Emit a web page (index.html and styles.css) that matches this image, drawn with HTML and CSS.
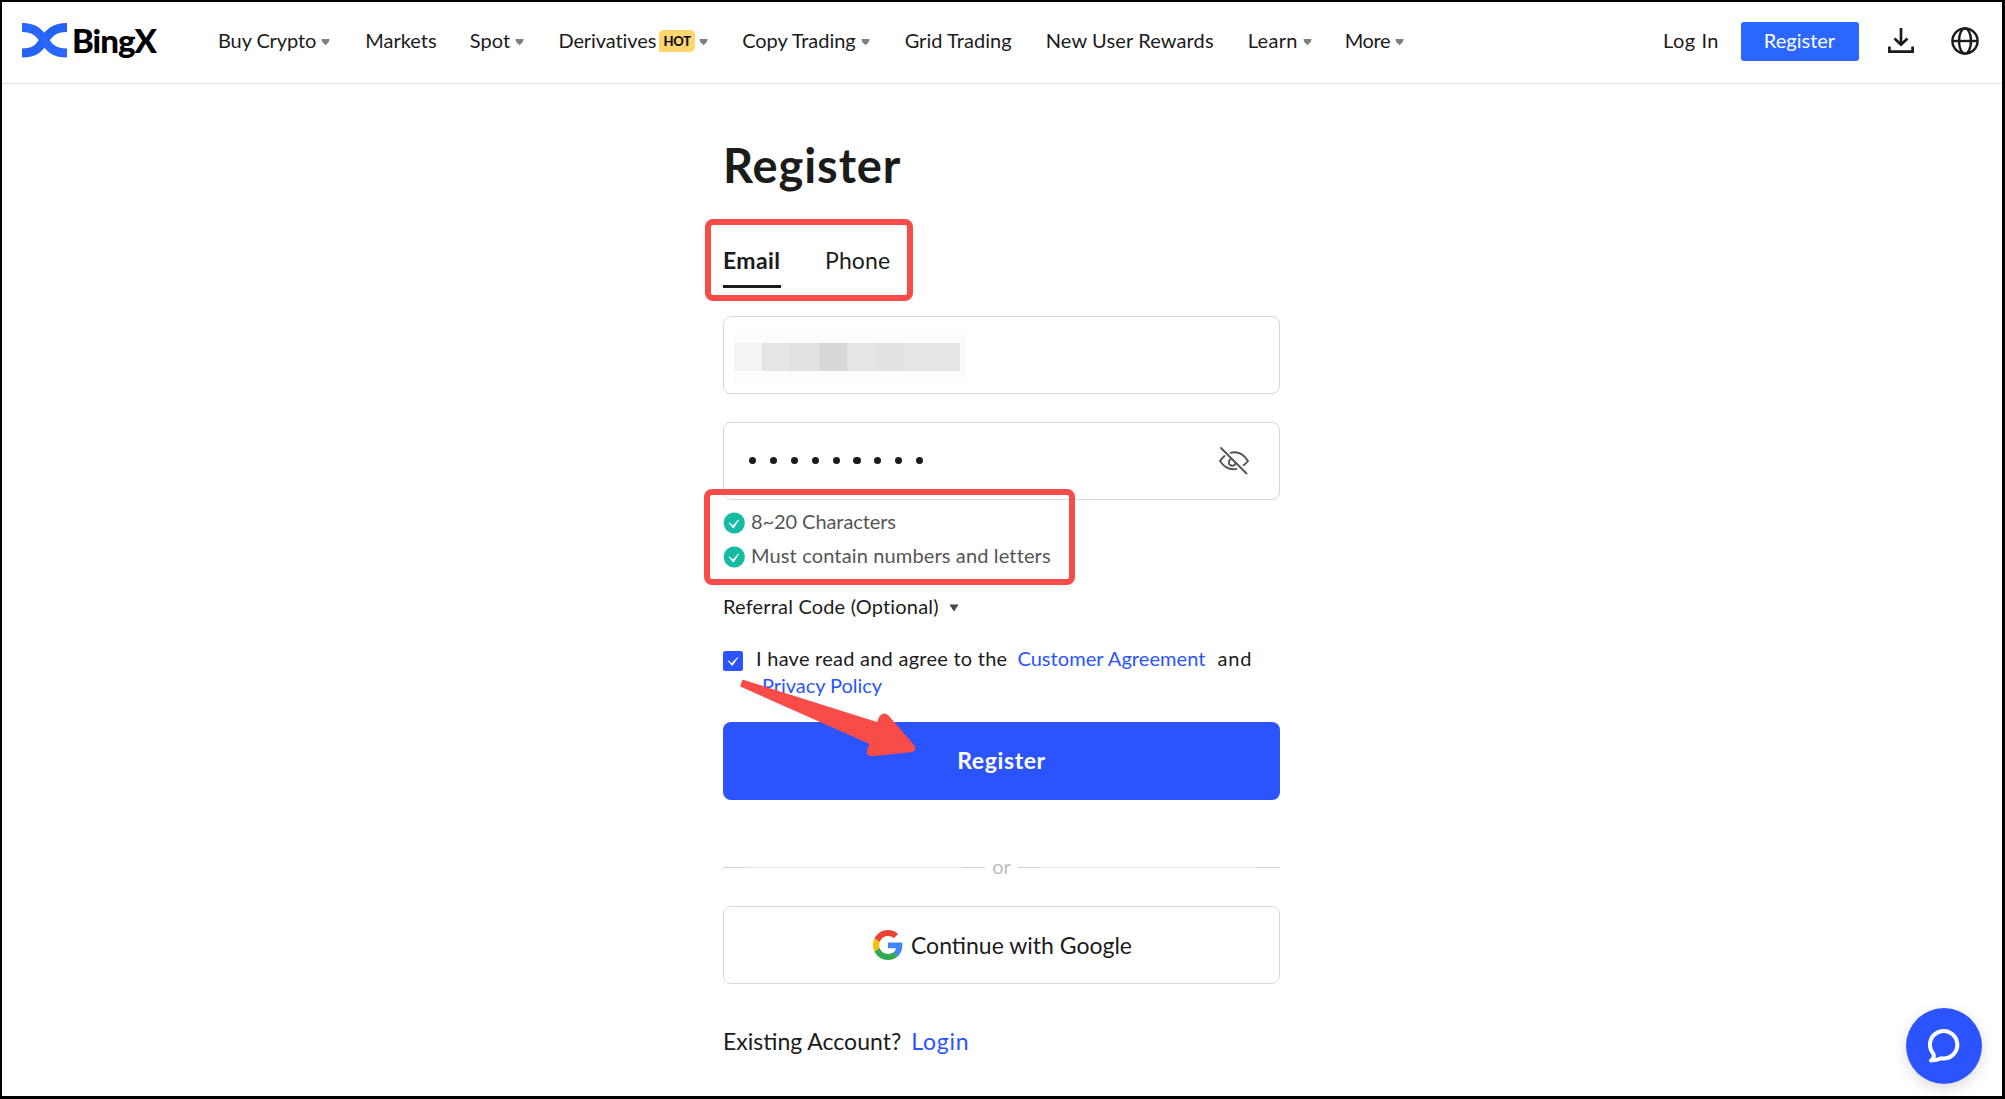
FILE: index.html
```html
<!DOCTYPE html>
<html lang="en">
<head>
<meta charset="utf-8">
<title>Register | BingX</title>
<link rel="stylesheet" href="styles.css">
</head>
<body>
<div class="page">
  <header class="header">
    <a class="logo">
      <svg class="logo-mark" width="45" height="35" viewBox="0 0 45 35">
        <path d="M45 4.500C31 4.500 26.500 11 22 17.500S14 30 0 30" fill="none" stroke="#2461f5" stroke-width="9"/>
        <path d="M0 4.500C14 4.500 18 11 22.500 17.500S31 30 45 30" fill="none" stroke="#2966ff" stroke-width="9"/>
      </svg>
      <span class="logo-name">BingX</span>
    </a>
    <nav class="nav">
      <a class="nav-item tight">Buy Crypto<svg class="caret" viewBox="0 0 9 8"><path d="M.5 1h8L7.800 4 4.500 7.300 1.200 4z"/></svg></a>
      <a class="nav-item markets">Markets</a>
      <a class="nav-item spot">Spot<svg class="caret" viewBox="0 0 9 8"><path d="M.5 1h8L7.800 4 4.500 7.300 1.200 4z"/></svg></a>
      <a class="nav-item tight">Derivatives<span class="hot">HOT</span><svg class="caret" viewBox="0 0 9 8"><path d="M.5 1h8L7.800 4 4.500 7.300 1.200 4z"/></svg></a>
      <a class="nav-item copy">Copy Trading<svg class="caret" viewBox="0 0 9 8"><path d="M.5 1h8L7.800 4 4.500 7.300 1.200 4z"/></svg></a>
      <a class="nav-item grid-trading">Grid Trading</a>
      <a class="nav-item rewards">New User Rewards</a>
      <a class="nav-item learn">Learn<svg class="caret" viewBox="0 0 9 8"><path d="M.5 1h8L7.800 4 4.500 7.300 1.200 4z"/></svg></a>
      <a class="nav-item more">More<svg class="caret" viewBox="0 0 9 8"><path d="M.5 1h8L7.800 4 4.500 7.300 1.200 4z"/></svg></a>
    </nav>
    <div class="actions">
      <a class="log-in">Log In</a>
      <a class="header-register">Register</a>
      <svg class="download" width="26" height="26" viewBox="0 0 26 26" fill="none" stroke="#1b1b1b" stroke-width="2.700"><path d="M13 0v16M6.500 10.500l6.500 6.200 6.500-6.200M1.400 18.500v5.200h23.200v-5.200"/></svg>
      <svg class="globe" width="28" height="28" viewBox="0 0 28 28" fill="none" stroke="#1b1b1b" stroke-width="2.400"><circle cx="14" cy="14" r="12.600"/><ellipse cx="14" cy="14" rx="6" ry="12.600"/><path d="M1.400 14h25.200"/></svg>
    </div>
  </header>

  <main class="form">
    <h1 class="title">Register</h1>
    <div class="tabs">
      <a class="tab active">Email</a>
      <a class="tab">Phone</a>
      <div class="mark mark-tabs"></div>
    </div>
    <div class="field email">
      <div class="mosaic"><i class="c1"></i><i class="c2"></i><i class="c3"></i><i class="c4"></i><i class="c2"></i><i class="c3"></i><i class="c2"></i><i class="c2"></i></div>
    </div>
    <div class="field password">
      <div class="dots"><i></i><i></i><i></i><i></i><i></i><i></i><i></i><i></i><i></i></div>
      <svg class="eye" width="32" height="30" viewBox="0 0 32 30" fill="none" stroke="#555" stroke-width="1.900" stroke-linecap="round"><path d="M3 2l25.500 25.500M6.500 10Q3.500 12.500 2 15C6 21 12 24.300 18.500 22.900M12.500 6.800C20 5 26 8.800 30 15Q28 17.600 25.500 19.300M13 13.200a3.400 3.400 0 1 0 4.400 4.400"/></svg>
    </div>
    <ul class="rules">
      <li class="rule"><svg class="tick" width="22" height="22" viewBox="0 0 22 22"><circle cx="11.300" cy="11" r="10.600" fill="#15bca3"/><path d="M6.200 10.900l3.600 3 5.800-6-5.300 8.200z" fill="#fff" stroke="#fff" stroke-linejoin="round"/></svg><span class="rule-length">8~20 Characters</span></li>
      <li class="rule"><svg class="tick" width="22" height="22" viewBox="0 0 22 22"><circle cx="11.300" cy="11" r="10.600" fill="#15bca3"/><path d="M6.200 10.900l3.600 3 5.800-6-5.300 8.200z" fill="#fff" stroke="#fff" stroke-linejoin="round"/></svg><span class="rule-letters">Must contain numbers and letters</span></li>
      <li class="mark mark-rules"></li>
    </ul>
    <div class="referral">Referral Code (Optional)<svg class="referral-caret" width="10" height="8" viewBox="0 0 10 8"><path d="M.5.500h9L5 7.500z" fill="#444"/></svg></div>
    <div class="agreement">
      <svg class="checkbox" width="20" height="20" viewBox="0 0 20 20"><rect width="20" height="20" rx="2.500" fill="#2b54ff"/><path d="M5.300 9.900l3.400 2.800 5.800-6-5.300 7.800z" fill="#fff" stroke="#fff" stroke-linejoin="round"/></svg>
      <p class="terms"><span class="consent">I have read and agree to the</span><a class="link customer">Customer Agreement</a><span class="and">and</span><br><a class="link privacy">Privacy Policy</a></p>
    </div>
    <button class="submit">Register</button>
    <div class="divider"><span class="rule-line"></span><span class="or">or</span><span class="rule-line"></span></div>
    <button class="google">
      <svg width="30" height="30" viewBox="0 0 48 48"><path fill="#ea4335" d="M24 9.500c3.540 0 6.710 1.220 9.210 3.600l6.850-6.850C35.900 2.380 30.470 0 24 0 14.620 0 6.510 5.380 2.560 13.220l7.980 6.190C12.430 13.720 17.740 9.500 24 9.500z"/><path fill="#4285f4" d="M46.980 24.550c0-1.570-.15-3.090-.38-4.550H24v9.020h12.940c-.58 2.960-2.260 5.480-4.780 7.180l7.730 6c4.510-4.180 7.090-10.360 7.090-17.650z"/><path fill="#fbbc05" d="M10.530 28.590c-.48-1.450-.76-2.990-.76-4.590s.27-3.140.76-4.590l-7.980-6.190C.92 16.460 0 20.120 0 24s.92 7.540 2.560 10.780z"/><path fill="#34a853" d="M24 48c6.480 0 11.930-2.130 15.890-5.810l-7.730-6c-2.150 1.450-4.920 2.300-8.160 2.300-6.260 0-11.570-4.220-13.470-9.910l-7.980 6.190C6.510 42.620 14.620 48 24 48z"/></svg>
      <span>Continue with Google</span>
    </button>
    <p class="existing">Existing Account?<a class="link login">Login</a></p>
    <svg class="arrow" width="180" height="84" viewBox="738 676 180 84"><path d="M743 680.500L877.500 723 880 717Q883.500 712 888 716L913.500 745.500Q916.500 750.500 911 751.500L872 755.500Q866.500 755 868 749.500L870.500 743.500 741 686z" fill="#f84c48" stroke="#f84c48" stroke-width="1.500" stroke-linejoin="round"/></svg>
  </main>

  <div class="chat">
    <svg width="34" height="36" viewBox="0 0 34 36" fill="none" stroke="#fff" stroke-width="4" stroke-linejoin="round" stroke-linecap="round"><path d="M3 31.500C5.500 30 6.300 28 5.500 25A13.700 13.700 0 1 1 13.500 29.300Q9 31.500 3 31.500z"/></svg>
  </div>
</div>
</body>
</html>
```
FILE: styles.css
```css
* { box-sizing: border-box; }

body {
  margin: 0;
  font: 20px/24px Lato, "Liberation Sans", sans-serif;
  color: #1b1b1b;
  background: #fff;
}

svg { display: block; flex: none; }

.page {
  position: relative;
  height: 1099px;
  border: 2px solid #000;
  border-right-width: 3px;
  border-bottom-width: 3px;
  overflow: hidden;
}

/* Header */
.header {
  display: flex;
  align-items: center;
  height: 82px;
  padding: 0 23px 5px 20px;
  border-bottom: 1px solid #e0e0e0;
}

.logo { display: flex; align-items: center; width: 196px; }
.logo-name {
  margin-left: 5px;
  font-size: 33px;
  line-height: 36px;
  font-weight: 900;
  letter-spacing: -1px;
  color: #000;
}

.nav { display: flex; align-items: center; gap: 34px; }
.nav-item { display: flex; align-items: center; white-space: nowrap; }
.tight { letter-spacing: -.1px; }
.markets { margin: 0 -1px 0 1px; }
.spot { letter-spacing: .15px; }
.copy { letter-spacing: -.05px; }
.grid-trading { margin-left: 1px; letter-spacing: .05px; }
.rewards { letter-spacing: .13px; }
.learn { letter-spacing: .3px; }
.more { margin-left: -1px; letter-spacing: -.4px; }
.caret { width: 9px; height: 8px; margin: 3px 0 0 5px; fill: #808080; }
.hot {
  width: 36px;
  height: 22px;
  margin: 1px 0 0 3px;
  border-radius: 5px 5px 5px 0;
  background: #ffd56f;
  color: #111;
  font-size: 13px;
  line-height: 22px;
  font-weight: 900;
  letter-spacing: -.3px;
  text-align: center;
}
.hot + .caret { margin-left: 4px; }

.actions { display: flex; align-items: center; margin-left: auto; }
.log-in { margin-right: 22px; letter-spacing: .5px; }
.header-register {
  width: 118px;
  height: 39px;
  margin-top: 2px;
  padding-right: 1px;
  border-radius: 3px;
  background: #2a66ff;
  color: #fff;
  line-height: 36px;
  text-align: center;
}
.download { margin: 1px 37px 0 29px; }
.globe { margin-top: 2px; }

/* Form */
.form { position: relative; width: 557px; margin: 53px 0 0 721px; }

.title {
  margin: 0;
  font-size: 47px;
  line-height: 56px;
  font-weight: 700;
  letter-spacing: .9px;
}

.tabs {
  position: relative;
  display: flex;
  gap: 44px;
  height: 42px;
  margin: 53px 0 28px;
  font-size: 23px;
  line-height: 28px;
}
.tab { letter-spacing: .14px; }
.tab.active {
  width: 58px;
  border-bottom: 3px solid #1b1b1b;
  font-weight: 700;
  letter-spacing: .4px;
}

/* Red highlight frames over the form */
.mark { position: absolute; border: 6px solid #f84c48; border-radius: 8px; }
.mark-tabs { left: -18px; top: -27px; width: 208px; height: 82px; }
.mark-rules { left: -19px; top: -20px; width: 371px; height: 96px; }

.field {
  display: flex;
  align-items: center;
  height: 78px;
  border: 1px solid #d9d9d9;
  border-radius: 8px;
}
.email { padding-left: 10px; }
.mosaic { display: flex; padding: 9px 7px 11px 0; margin-top: 5px; background: #fcfcfc; }
.mosaic i { width: 28.200px; height: 28px; }
.c1 { background: #f4f4f4; }
.c2 { background: #e5e5e5; }
.c3 { background: #e1e1e1; }
.c4 { background: #d8d8d8; }

.password { justify-content: space-between; margin-top: 28px; padding: 0 29px 1px 25px; }
.dots { display: flex; gap: 13.700px; }
.dots i { width: 7.200px; height: 7.200px; border-radius: 50%; background: #1b1b1b; }
.eye { margin-top: 1px; }

.rules {
  position: relative;
  margin: 9px 0 0;
  padding: 0;
  list-style: none;
  color: #555;
}
.rule { display: flex; align-items: center; height: 24px; margin-bottom: 10px; }
.tick { margin: 4px 6px 0 0; }
.rule-length { letter-spacing: -.08px; }
.rule-letters { letter-spacing: .14px; }

.referral {
  display: flex;
  align-items: center;
  gap: 10px;
  margin-top: 27px;
  letter-spacing: .18px;
}
.referral-caret { margin-top: 3px; }

.agreement { display: flex; margin-top: 27px; }
.checkbox { margin: 6px 13px 0 0; }
.terms { margin: 0; line-height: 27px; white-space: nowrap; }
.consent { letter-spacing: .25px; }
.customer { margin: 0 12px 0 10px; letter-spacing: .07px; }
.and { letter-spacing: .8px; }
.privacy { margin-left: 6px; letter-spacing: -.04px; }
.link { color: #2b54ff; }

.submit {
  display: block;
  width: 100%;
  height: 78px;
  margin-top: 23px;
  padding: 0 0 2px;
  border: 0;
  border-radius: 8px;
  background: #2b54ff;
  color: #fff;
  font: 700 23px/28px Lato, sans-serif;
  letter-spacing: .6px;
}

.divider { display: flex; align-items: center; gap: 7px; margin: 54px 0 28px; }
.rule-line {
  flex: 1;
  height: 1px;
  margin-top: 2px;
  background: linear-gradient(90deg, #cfcfcf 22px, #e2e2e2 22px calc(100% - 22px), #cfcfcf calc(100% - 22px));
}
.or { color: #bdbdbd; }

.google {
  display: flex;
  align-items: center;
  justify-content: center;
  gap: 8px;
  width: 100%;
  height: 78px;
  padding: 0 0 0 2px;
  border: 1px solid #d9d9d9;
  border-radius: 8px;
  background: #fff;
  color: #1b1b1b;
  font: 23px/28px Lato, sans-serif;
}
.google span { margin-top: -1px; }

.existing { margin: 43px 0 0; font-size: 23px; line-height: 28px; }
.login { margin-left: 10px; letter-spacing: .8px; }

.arrow { position: absolute; left: 15px; top: 539px; }

/* Floating chat button */
.chat {
  position: absolute;
  right: 20px;
  bottom: 12px;
  display: flex;
  align-items: center;
  justify-content: center;
  width: 76px;
  height: 76px;
  padding: 1px 0 0 2px;
  border-radius: 50%;
  background: #2b54ff;
  box-shadow: 0 4px 14px rgba(0, 0, 0, .15);
}
```
